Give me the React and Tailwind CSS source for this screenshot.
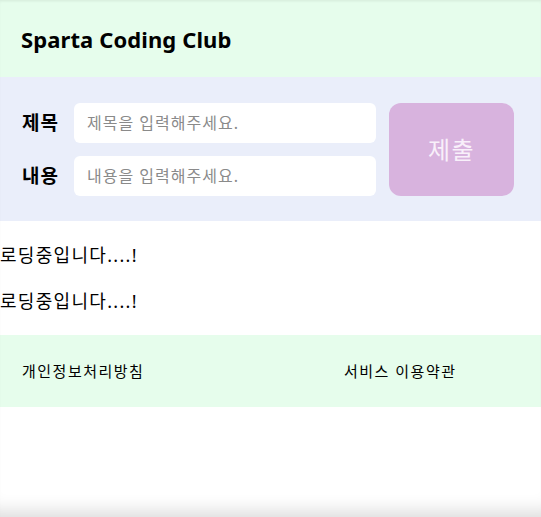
import React from "react";

export default function App() {
  const posts = ["로딩중입니다....!", "로딩중입니다....!"];

  return (
    <div className="min-h-screen bg-white text-black font-['Noto_Sans','Noto_Sans_CJK_KR',sans-serif]">
      <header className="h-[77px] bg-[#e6fdec] flex items-center px-[21px]">
        <h1 className="text-[22px] font-bold leading-none tracking-[0.1px]">Sparta Coding Club</h1>
      </header>

      <section className="bg-[#eaeefa] pt-[26px] pb-[25px] pl-[22px] pr-[27px] flex gap-[13px]">
        <div className="flex-1 flex flex-col gap-[13px]">
          <div className="flex items-center gap-4">
            <label className="text-[19px] font-bold w-9 shrink-0 tracking-[1px] whitespace-nowrap">제목</label>
            <input
              className="flex-1 h-10 rounded-md bg-white px-[13px] text-[16px] tracking-[1px] outline-none placeholder:text-[#8a8a8a]"
              placeholder="제목을 입력해주세요."
            />
          </div>
          <div className="flex items-center gap-4">
            <label className="text-[19px] font-bold w-9 shrink-0 tracking-[1px] whitespace-nowrap">내용</label>
            <input
              className="flex-1 h-10 rounded-md bg-white px-[13px] text-[16px] tracking-[1px] outline-none placeholder:text-[#8a8a8a]"
              placeholder="내용을 입력해주세요."
            />
          </div>
        </div>
        <button className="w-[125px] rounded-xl bg-[#d8b3de] text-[24px] tracking-[1.5px] text-[#f8f0fa]">
          제출
        </button>
      </section>

      <ul className="py-5 flex flex-col gap-[18px]">
        {posts.map((p, i) => (
          <li key={i} className="text-[18px] leading-7 tracking-[1.3px]">
            {p}
          </li>
        ))}
      </ul>

      <footer className="h-[72px] bg-[#e6fdec] flex items-center px-[22px] text-[15px] tracking-[1.5px]">
        <span className="w-[322px]">개인정보처리방침</span>
        <span>서비스 이용약관</span>
      </footer>

      <div className="fixed inset-0 pointer-events-none shadow-[inset_0_-22px_18px_-16px_rgba(0,0,0,0.14),inset_0_2px_3px_-1px_rgba(0,0,0,0.08)]" />
    </div>
  );
}
